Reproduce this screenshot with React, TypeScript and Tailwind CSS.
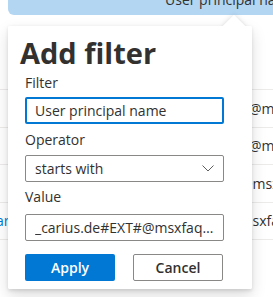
import type { ReactElement } from 'react';

const rows = [
  { left: '', pad: 'w-[249px]', email: '@msxfaq.onmicrosoft.com' },
  { left: '', pad: 'w-[249px]', email: '@msxfaq.onmicrosoft.com' },
  { left: '', pad: 'w-[240px]', email: '@msxfaq.onmicrosoft.com' },
  { left: 'ari', pad: 'w-[227px]', email: '@msxfaq.onmicrosoft.com' },
];

function ChevronDown(): ReactElement {
  return (
    <svg width="12" height="7" viewBox="0 0 12 7" fill="none" aria-hidden="true">
      <path d="M0.5 0.5L6 6L11.5 0.5" stroke="#605e5c" strokeWidth="1" />
    </svg>
  );
}

export default function App(): ReactElement {
  return (
    <div className="relative h-[297px] w-[273px] overflow-hidden bg-white font-['Segoe_UI','Open_Sans',sans-serif] text-[14px] text-[#323130]">
      {/* column header hint */}
      <div className="ml-[8px] h-[15px] overflow-hidden whitespace-nowrap rounded-bl-[6px] bg-[#b3d6f2] pl-[157px]">
        <div className="-mt-[10px] leading-[20px]">User principal name</div>
      </div>

      <div className="h-[75px] border-b border-[#edebe9]" />
      {rows.map((r, i) => (
        <div key={i} className="flex h-[37.5px] items-center overflow-hidden whitespace-nowrap border-b border-[#edebe9]">
          <div className={`${r.pad} shrink-0 overflow-hidden`}>
            {r.left ? <span className="-ml-[4px] text-[#0078d4]">{r.left}</span> : null}
          </div>
          <span>{r.email}</span>
        </div>
      ))}

      {/* callout */}
      <div className="absolute left-[8px] top-[26px] w-[244px] rounded-[2px] shadow-[0_6.4px_14.4px_0_rgba(0,0,0,0.132),0_1.2px_3.6px_0_rgba(0,0,0,0.108)]">
        <div className="absolute left-[218px] top-[-8px] h-[16px] w-[16px] rotate-45 bg-white shadow-[0_0_5px_0_rgba(0,0,0,0.15)]" />
        <div className="relative flex flex-col rounded-[2px] bg-white pb-[8px] pl-[17px] pr-[28px] pt-[9px]">
          <h2 className="-ml-[5px] text-[29px] font-bold leading-[36px]">Add filter</h2>

          <label className="mt-[2px] leading-[20px]">Filter</label>
          <input
            readOnly
            defaultValue="User principal name"
            className="mt-[4px] h-[27px] w-[199px] rounded-[2px] border-2 border-[#0078d4] px-[8px] leading-[20px] text-[#323130] outline-none"
          />

          <label className="mt-[6px] leading-[20px]">Operator</label>
          <div className="mt-[5px] flex h-[27px] w-[199px] items-center justify-between rounded-[2px] border border-[#8a8886] pl-[9px] pr-[9px]">
            <span className="leading-[20px]">starts with</span>
            <ChevronDown />
          </div>

          <label className="mt-[5px] leading-[20px]">Value</label>
          <input
            readOnly
            defaultValue="_carius.de#EXT#@msxfaq.onmicrosoft.com"
            className="mt-[7px] h-[27px] w-[199px] text-ellipsis rounded-[2px] border border-[#8a8886] px-[9px] leading-[20px] text-[#323130] outline-none"
          />

          <div className="mt-[13px] flex gap-[18px]">
            <button className="h-[27px] w-[90px] rounded-[2px] bg-[#0078d4] font-semibold text-white">Apply</button>
            <button className="h-[27px] w-[90px] rounded-[2px] border border-[#8a8886] bg-white font-semibold text-[#323130]">
              Cancel
            </button>
          </div>
        </div>
      </div>
    </div>
  );
}
